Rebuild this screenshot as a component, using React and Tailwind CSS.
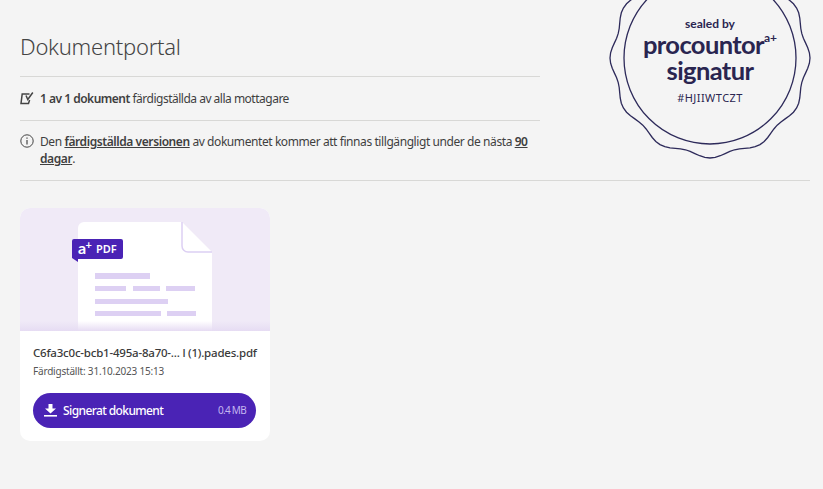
import React from 'react';

const fontStack = 'font-["Noto_Sans",sans-serif]';

// wavy seal outline, 12 bumps round the circle
const sealPath = () => {
  const pts = [];
  for (let i = 0; i < 360; i += 3) {
    const a = (i * Math.PI) / 180;
    const r = 97.5 + 2.5 * Math.cos(12 * a);
    pts.push(`${(101 + r * Math.cos(a)).toFixed(2)},${(58 + r * Math.sin(a)).toFixed(2)}`);
  }
  return `M${pts.join('L')}Z`;
};

function Seal() {
  return (
    <div className="absolute left-[609px] top-0 h-[160px] w-[202px] overflow-hidden text-[#2a2550]">
      <svg className="absolute inset-0" width="202" height="160" viewBox="0 0 202 160" fill="none" stroke="#2d2a5a" strokeWidth="1.3">
        <path d={sealPath()} />
        <circle cx="101" cy="58" r="86" />
      </svg>
      <div className="absolute inset-x-0 top-[17px] flex flex-col items-center font-['Lato',sans-serif]">
        <div className="text-[12px] leading-[14px] font-bold">sealed by</div>
        <div className="flex items-start text-[25.5px] leading-[26px] font-bold tracking-[-0.6px]">
          <span>procountor</span>
          <span className="text-[12px] leading-[14px] tracking-normal">a+</span>
        </div>
        <div className="text-[25.5px] leading-[27px] font-bold tracking-[-0.6px]">signatur</div>
        <div className="mt-[7px] text-[11px] leading-[14px] tracking-[0.45px] font-['Noto_Sans',sans-serif]">#HJIIWTCZT</div>
      </div>
    </div>
  );
}

function DocArt() {
  return (
    <svg width="250" height="123" viewBox="0 0 250 123" className="block">
      <defs>
        <linearGradient id="fade" x1="0" y1="0" x2="0" y2="1">
          <stop offset="0" stopColor="#e6dcf3" stopOpacity="0" />
          <stop offset="1" stopColor="#e6dcf3" />
        </linearGradient>
      </defs>
      <path d="M58 123V20a6 6 0 0 1 6-6H162L192 44V123Z" fill="#fff" />
      <path d="M162 14V38a6 6 0 0 0 6 6H192" fill="none" stroke="#dccff3" strokeWidth="1.5" />
      <g fill="#ddd0f3">
        <rect x="75" y="65" width="55" height="6" />
        <rect x="75" y="78" width="31" height="5" />
        <rect x="113" y="78" width="27" height="5" />
        <rect x="146" y="78" width="29" height="5" />
        <rect x="75" y="91" width="73" height="5" />
        <rect x="75" y="103" width="66" height="5" />
        <rect x="147" y="103" width="29" height="5" />
      </g>
      <rect x="0" y="113" width="250" height="10" fill="url(#fade)" />
      <path d="M52 33a2 2 0 0 1 2-2H101a2 2 0 0 1 2 2V49a2 2 0 0 1-2 2H58V54L52 50Z" fill="#4a23b5" />
      <text x="58" y="46" fill="#fff" fontFamily="Lato, sans-serif" fontWeight="700" fontSize="16">a</text>
      <text x="65.5" y="41" fill="#fff" fontFamily="Lato, sans-serif" fontWeight="700" fontSize="11">+</text>
      <text x="76" y="45" fill="#fff" fontFamily="Noto Sans, sans-serif" fontWeight="600" fontSize="11">PDF</text>
    </svg>
  );
}

export default function App() {
  return (
    <div className={`${fontStack} relative min-h-[489px] overflow-hidden bg-[#f4f4f4] pr-[13px] pl-[20px] text-[#3f3f3f]`}>
      <Seal />
      <div className="w-[520px]">
        <h1 className="flex h-[76px] items-center pt-[16px] text-[22px] font-light tracking-[-0.25px] text-[#444]">Dokumentportal</h1>
        <div className="flex h-[44px] items-center gap-[6px] border-t border-[#d8d8d6] text-[12px] tracking-[-0.5px]">
          <svg width="14" height="13" viewBox="0 0 14 13" fill="none" stroke="#444" className="shrink-0">
            <path d="M9.5 2H2.2L1 11.5H8.5L9.6 8" strokeWidth="1.5" />
            <path d="M6 3.5L7.8 7.5L12.8 0.5" strokeWidth="1.5" />
          </svg>
          <p><b className="font-semibold">1 av 1 dokument</b> färdigställda av alla mottagare</p>
        </div>
        <div className="flex gap-[6px] border-t border-[#d8d8d6] pt-[12px] pb-[13px] text-[12px] leading-[17px] tracking-[-0.42px]">
          <svg width="14" height="14" viewBox="0 0 14 14" fill="none" stroke="#444" strokeWidth="1" className="mt-[1px] shrink-0">
            <circle cx="7" cy="7" r="6.2" />
            <path d="M7 6V10.5M7 3.5V4.8" strokeWidth="1.2" />
          </svg>
          <p>
            Den <b className="font-semibold underline">färdigställda versionen</b> av dokumentet kommer att finnas tillgängligt under de nästa{' '}
            <b className="font-semibold underline">90 dagar</b>.
          </p>
        </div>
      </div>
      <div className="border-t border-[#d8d8d6] pt-[27px]">
        <div className="w-[250px] overflow-hidden rounded-[10px] bg-white">
          <div className="bg-[#f0eaf7]">
            <DocArt />
          </div>
          <div className="pt-[14px] pr-[14px] pb-[13px] pl-[13px]">
            <div className="text-[11.5px] leading-[16px] font-medium tracking-[-0.21px] whitespace-nowrap text-[#3a3a3a]">C6fa3c0c-bcb1-495a-8a70-... l (1).pades.pdf</div>
            <div className="mt-[3px] text-[10px] leading-[14px] tracking-[-0.2px] text-[#555]">Färdigställt: 31.10.2023 15:13</div>
            <button className="mt-[15px] flex h-[35px] w-full items-center rounded-full bg-[#4a23b5] pr-[10px] pl-[11px] text-white">
              <svg width="13" height="13" viewBox="0 0 13 13" fill="#fff" className="shrink-0">
                <path d="M4.5 0H8.5V4.5H12L6.5 9.5L1 4.5H4.5Z" />
                <rect x="0" y="11" width="13" height="1.6" />
              </svg>
              <span className="ml-[6px] text-[12px] font-medium tracking-[-0.6px]">Signerat dokument</span>
              <span className="ml-auto text-[10px] tracking-[-0.7px] text-[#c3b6f0]">0.4 MB</span>
            </button>
          </div>
        </div>
      </div>
    </div>
  );
}
